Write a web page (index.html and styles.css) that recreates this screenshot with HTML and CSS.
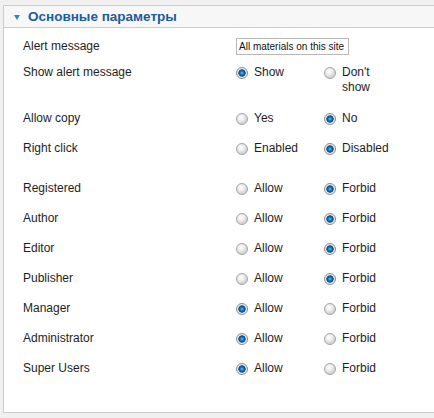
FILE: index.html
```html
<!DOCTYPE html>
<html lang="ru">
<head>
  <meta charset="utf-8" />
  <meta name="viewport" content="width=device-width, initial-scale=1" />
  <title>Основные параметры</title>
  <link rel="stylesheet" href="styles.css">
</head>
<body>
<div class="pane">
  <h3 class="pane-title"><span class="pane-arrow"></span>Основные параметры</h3>
  <ul class="params">
    <li class="param param--input">
      <label class="param-label" for="alert-text">Alert message</label>
      <input class="param-text" id="alert-text" type="text" value="All materials on this site" />
    </li>
    <li class="param param--tall">
      <span class="param-label">Show alert message</span>
      <label class="opt"><input class="radio" type="radio" name="show" checked /><span class="opt-text">Show</span></label>
      <label class="opt"><input class="radio" type="radio" name="show" /><span class="opt-text">Don't show</span></label>
    </li>
    <li class="param">
      <span class="param-label">Allow copy</span>
      <label class="opt"><input class="radio" type="radio" name="copy" /><span class="opt-text">Yes</span></label>
      <label class="opt"><input class="radio" type="radio" name="copy" checked /><span class="opt-text">No</span></label>
    </li>
    <li class="param">
      <span class="param-label">Right click</span>
      <label class="opt"><input class="radio" type="radio" name="click" /><span class="opt-text">Enabled</span></label>
      <label class="opt"><input class="radio" type="radio" name="click" checked /><span class="opt-text">Disabled</span></label>
    </li>
    <li class="param param--gap">
      <span class="param-label">Registered</span>
      <label class="opt"><input class="radio" type="radio" name="g2" /><span class="opt-text">Allow</span></label>
      <label class="opt"><input class="radio" type="radio" name="g2" checked /><span class="opt-text">Forbid</span></label>
    </li>
    <li class="param">
      <span class="param-label">Author</span>
      <label class="opt"><input class="radio" type="radio" name="g3" /><span class="opt-text">Allow</span></label>
      <label class="opt"><input class="radio" type="radio" name="g3" checked /><span class="opt-text">Forbid</span></label>
    </li>
    <li class="param">
      <span class="param-label">Editor</span>
      <label class="opt"><input class="radio" type="radio" name="g4" /><span class="opt-text">Allow</span></label>
      <label class="opt"><input class="radio" type="radio" name="g4" checked /><span class="opt-text">Forbid</span></label>
    </li>
    <li class="param">
      <span class="param-label">Publisher</span>
      <label class="opt"><input class="radio" type="radio" name="g5" /><span class="opt-text">Allow</span></label>
      <label class="opt"><input class="radio" type="radio" name="g5" checked /><span class="opt-text">Forbid</span></label>
    </li>
    <li class="param">
      <span class="param-label">Manager</span>
      <label class="opt"><input class="radio" type="radio" name="g6" checked /><span class="opt-text">Allow</span></label>
      <label class="opt"><input class="radio" type="radio" name="g6" /><span class="opt-text">Forbid</span></label>
    </li>
    <li class="param">
      <span class="param-label">Administrator</span>
      <label class="opt"><input class="radio" type="radio" name="g7" checked /><span class="opt-text">Allow</span></label>
      <label class="opt"><input class="radio" type="radio" name="g7" /><span class="opt-text">Forbid</span></label>
    </li>
    <li class="param">
      <span class="param-label">Super Users</span>
      <label class="opt"><input class="radio" type="radio" name="g8" checked /><span class="opt-text">Allow</span></label>
      <label class="opt"><input class="radio" type="radio" name="g8" /><span class="opt-text">Forbid</span></label>
    </li>
  </ul>
</div>
</body>
</html>
```

FILE: styles.css
```css
:root {
  --fon: #f0f0f0;
  --raja: #cccccc;
  --sininen: #1a5c9e;
  --nuoli: #2a86cc;
  --teksti: #1e1e1e;
}
html, body {
  margin: 0;
  padding: 0;
}
body {
  background-color: var(--fon);
  font-family: "Liberation Sans", Arial, sans-serif;
  font-size: 12px;
  color: var(--teksti);
  padding: 5px 0 5px 3px;
  overflow: hidden;
}
.pane {
  background-color: #fff;
  border: 1px solid var(--raja);
  border-right: none;
}
.pane-title {
  display: flex;
  align-items: center;
  margin: 0;
  padding: 0 0 0 10px;
  height: 21px;
  line-height: 21px;
  font-size: 13.5px;
  font-weight: bold;
  color: var(--sininen);
  background-color: #f7f7f7;
  border-bottom: 1px solid var(--raja);
}
.pane-arrow {
  width: 0;
  height: 0;
  margin: 2px 8px 0 0;
  border-left: 3.5px solid transparent;
  border-right: 3.5px solid transparent;
  border-top: 5px solid var(--nuoli);
}
.params {
  list-style: none;
  margin: 0;
  padding: 3px 0 28px 19px;
}
.param {
  display: flex;
  align-items: flex-start;
  padding: 7px 0 8px;
  line-height: 15px;
}
.param--input {
  align-items: center;
  padding-bottom: 3px;
}
.param--tall {
  padding-bottom: 9px;
}
.param--gap {
  margin-top: 10px;
}
.param-label {
  width: 213px;
  flex: none;
}
.param-text {
  box-sizing: border-box;
  width: 113px;
  height: 17px;
  margin: 0;
  padding: 0 2px;
  border: 1px solid #b8b8b8;
  font-family: "Liberation Sans", Arial, sans-serif;
  font-size: 10px;
  color: #111;
}
.opt {
  display: flex;
  align-items: flex-start;
  width: 88px;
  cursor: pointer;
}
.opt-text {
  max-width: 52px;
}
.radio {
  appearance: none;
  -webkit-appearance: none;
  box-sizing: border-box;
  width: 12px;
  height: 12px;
  margin: 2px 6px 0 0;
  flex: none;
  border-radius: 50%;
  border: 1px solid #a4a4a4;
  background: radial-gradient(circle at 40% 35%, #ffffff 0, #eeeeee 3px, #d2d2d2 6px);
}
.radio:checked {
  border-color: #8a8a8a;
  background: radial-gradient(circle at 50% 50%, #5cc0f4 0, #1a82cc 1.5px, #0a4f8a 3px, #3a6a90 3.5px, #f4f4f4 4px, #dcdcdc 6px);
}
```
